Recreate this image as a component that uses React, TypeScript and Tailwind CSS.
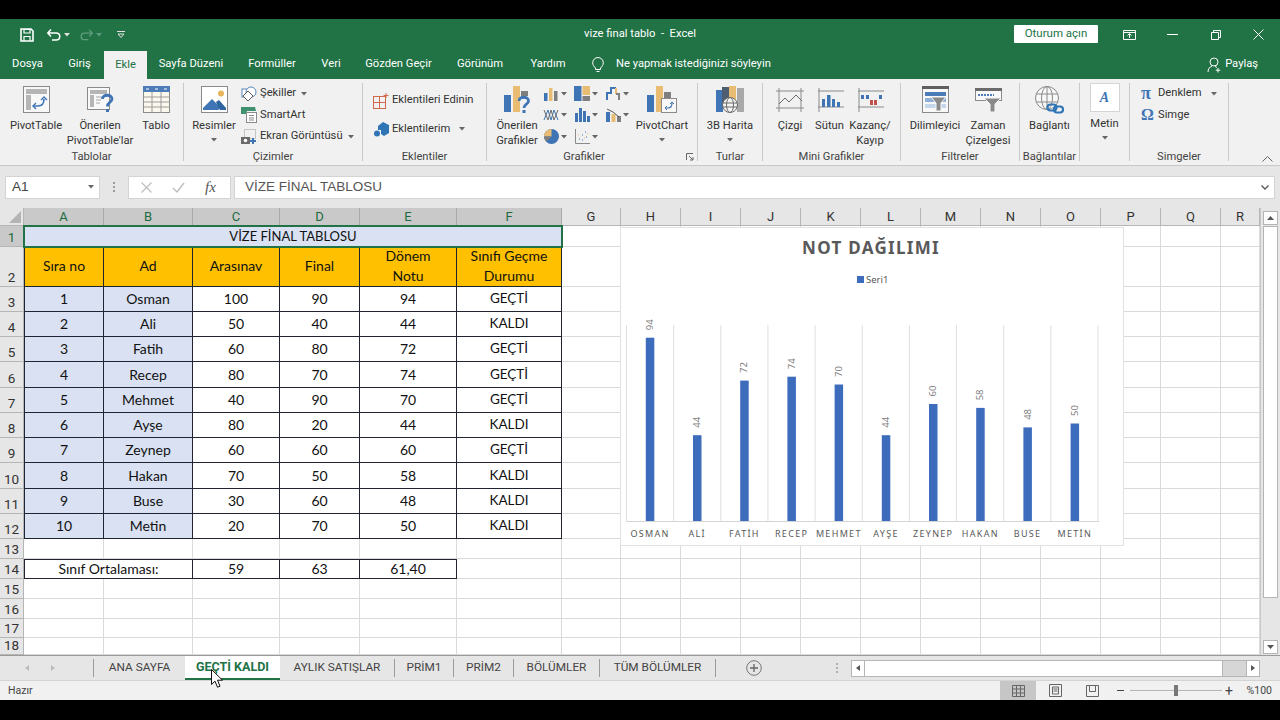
import type { ReactNode } from 'react';

const BLUE = '#3f74b5';
const TAN = '#e8bd73';
const GREY = '#7f7f7f';

function Ico({ w, h, children }: { w: number; h: number; children: ReactNode }) {
  return (
    <svg width={w} height={h} viewBox={`0 0 ${w} ${h}`} fill="none" className="shrink-0">
      {children}
    </svg>
  );
}

function Caret({ color = '#666' }: { color?: string }) {
  return (
    <svg width="6" height="4" viewBox="0 0 6 4" className="shrink-0">
      <path d="M0 0h6L3 3.5z" fill={color} />
    </svg>
  );
}

/* ---------- ribbon icons ---------- */

const pivotIcon = (
  <Ico w={27} h={27}>
    <rect x=".5" y=".5" width="26" height="26" fill="#f8f8f8" stroke="#8a8a8a" />
    <rect x="3" y="3" width="21" height="5" fill="#b5b5b5" />
    <rect x="3" y="9" width="5" height="15" fill="#b5b5b5" />
    <path d="M11 20h4c4 0 6-3 6-7" stroke={BLUE} strokeWidth="1.6" />
    <path d="M13 17l-3 3 3 3M18 14l3-3 3 3" stroke={BLUE} strokeWidth="1.4" />
  </Ico>
);

const suggestedPivotIcon = (
  <Ico w={27} h={27}>
    <rect x=".5" y="1.500" width="22" height="22" fill="#f8f8f8" stroke="#8a8a8a" />
    <rect x="3" y="4" width="17" height="4" fill="#b5b5b5" />
    <rect x="3" y="9" width="4" height="12" fill="#b5b5b5" />
    <path d="M9 11h6M9 14h5M9 17h4" stroke="#a8a8a8" />
    <path d="M15.500 13c0-5 9.500-5 9.500 0 0 3.500-4.500 3-4.500 7.500" stroke={BLUE} strokeWidth="2.800" />
    <rect x="19" y="23" width="3" height="3" fill={BLUE} />
  </Ico>
);

const tableIcon = (
  <Ico w={27} h={27}>
    <rect x=".5" y=".5" width="26" height="26" fill="#fdf8ee" stroke="#8a8a8a" />
    <rect x="0" y="0" width="27" height="6" fill="#4d7db8" />
    <path d="M3 3h3M12 3h3M21 3h3" stroke="#fff" />
    <path d="M0 11h27M0 16h27M0 21h27M9 6v21M18 6v21" stroke="#9c9c9c" />
  </Ico>
);

const pictureIcon = (
  <Ico w={27} h={27}>
    <rect x=".5" y=".5" width="26" height="26" fill="#fff" stroke="#8a8a8a" />
    <circle cx="20" cy="7.500" r="3" fill="#e8b45c" />
    <path d="M2 22l9-9 9 9-3 2H2z" fill={BLUE} />
    <path d="M15 16l3-2 7 8v2h-6z" fill="#2e659f" />
  </Ico>
);

const shapesIcon = (
  <Ico w={16} h={16}>
    <rect x="1" y="3" width="8" height="8" stroke="#5a86b8" fill="#fff" />
    <circle cx="10" cy="6" r="5" stroke="#5a86b8" fill="#fff" />
    <path d="M7 5l5 5-5 5-5-5z" stroke="#5f5f5f" fill="#fff" />
  </Ico>
);

const smartArtIcon = (
  <Ico w={16} h={16}>
    <path d="M0 0h14l1 4H6L5 7H0z" fill="#3f9170" />
    <rect x="5.500" y="5.500" width="10" height="10" fill="#fff" stroke="#8a8a8a" />
    <path d="M8 8.500h5M8 11h5M8 13h5" stroke="#8a8a8a" />
  </Ico>
);

const screenshotIcon = (
  <Ico w={16} h={16}>
    <rect x="3.500" y=".5" width="11" height="9" stroke="#999" strokeDasharray="1 1" />
    <rect x="0" y="8" width="9" height="7" fill="#6b6b6b" />
    <circle cx="4.500" cy="11.500" r="1.800" fill="#fff" />
    <path d="M12 9v6M9 12h6" stroke={BLUE} strokeWidth="2" />
  </Ico>
);

const addInGridIcon = (
  <Ico w={16} h={16}>
    <rect x=".5" y="3.500" width="12" height="12" stroke="#d0694a" />
    <path d="M.5 9.500h12M6.500 3.500v12" stroke="#d0694a" />
    <path d="M13 0v5M10.500 2.500h5" stroke="#d0694a" />
  </Ico>
);

const myAddInIcon = (
  <Ico w={15} h={15}>
    <path d="M4 4l5-4 6 3v8l-5 3-3-2V8H4z" fill="#2f75b5" />
    <circle cx="3" cy="11.500" r="3" fill="#2f75b5" />
  </Ico>
);

const suggestedChartIcon = (
  <Ico w={27} h={27}>
    <rect x="0" y="9" width="7" height="17" fill={BLUE} />
    <rect x="9" y="0" width="7" height="26" fill={TAN} />
    <rect x="17" y="5" width="7" height="5" fill={GREY} />
    <path d="M15 15c0-5 9.500-5 9.500 0 0 3.500-4.500 3-4.500 7" stroke={BLUE} strokeWidth="2.800" />
    <rect x="18.500" y="24" width="3" height="3" fill={BLUE} />
  </Ico>
);

const pivotChartIcon = (
  <Ico w={31} h={27}>
    <rect x="0" y="9" width="7" height="17" fill={BLUE} />
    <rect x="9" y="0" width="7" height="26" fill={TAN} />
    <rect x="17" y="6" width="7" height="9" fill={GREY} />
    <rect x="14.500" y="12.500" width="15" height="14" fill="#f8f8f8" stroke="#8a8a8a" />
    <path d="M18 22h3c3 0 4-2 4-5" stroke={BLUE} strokeWidth="1.200" />
    <path d="M23 18l2-2 2 2M20 20l-2 2 2 2" stroke={BLUE} />
  </Ico>
);

const colChart = (
  <Ico w={14} h={14}>
    <rect x="0" y="6" width="3.500" height="8" fill={BLUE} />
    <rect x="5" y="1" width="3.500" height="13" fill={TAN} />
    <rect x="10" y="4" width="3.500" height="10" fill={GREY} />
  </Ico>
);
const treeChart = (
  <Ico w={16} h={16}>
    <rect x="0" y="0" width="7.500" height="15" fill={BLUE} />
    <rect x="8.500" y="0" width="7.500" height="9" fill={TAN} />
    <rect x="8.500" y="10" width="7.500" height="5" fill={GREY} />
  </Ico>
);
const fallChart = (
  <Ico w={15} h={15}>
    <path d="M1 14V7h4V2h5" stroke={BLUE} strokeWidth="2" />
    <path d="M10 2v6" stroke={TAN} strokeWidth="2" />
    <path d="M10 8h3v6" stroke={GREY} strokeWidth="2" />
  </Ico>
);
const lineChart = (
  <Ico w={16} h={14}>
    <path d="M1 12L5 2l3 10 3-10 4 10" stroke={BLUE} />
    <path d="M1 2l4 10 3-10 3 10 4-10" stroke="#6b6b6b" />
  </Ico>
);
const histChart = (
  <Ico w={15} h={14}>
    <rect x="0" y="5" width="3" height="9" fill={BLUE} />
    <rect x="4" y="0" width="3" height="14" fill={BLUE} />
    <rect x="8" y="3" width="3" height="11" fill={BLUE} />
    <rect x="12" y="8" width="3" height="6" fill={BLUE} />
  </Ico>
);
const comboChart = (
  <Ico w={15} h={14}>
    <rect x="0" y="4" width="4" height="10" fill={BLUE} />
    <rect x="5.500" y="6" width="4" height="8" fill={TAN} />
    <rect x="11" y="8" width="4" height="6" fill={GREY} />
    <path d="M1 1l6 3 6 5" stroke="#555" />
  </Ico>
);
const pieChart = (
  <Ico w={15} h={15}>
    <circle cx="7.500" cy="7.500" r="7.500" fill={BLUE} />
    <path d="M7.500 7.500V0A7.500 7.500 0 0 0 0 7.500z" fill={TAN} />
    <path d="M7.500 7.500H0a7.500 7.500 0 0 0 2.200 5.300z" fill={GREY} />
  </Ico>
);
const scatterChart = (
  <Ico w={15} h={15}>
    <path d="M.5 0v14.500H15" stroke="#8a8a8a" />
    <path d="M4 10h1M7 11h1M7 6h1M11 8h1M10 3h1" stroke={BLUE} />
    <path d="M3 6h1M9 9h1M12 5h1" stroke={TAN} />
  </Ico>
);

const mapIcon = (
  <Ico w={28} h={28}>
    <rect x="0" y="4" width="7" height="22" fill={BLUE} />
    <rect x="6" y="1" width="7" height="20" fill="#4e5e70" />
    <rect x="13" y="0" width="7" height="20" fill={TAN} />
    <rect x="21" y="2" width="7" height="24" fill="#a9a9a9" />
    <circle cx="14" cy="19" r="7.500" fill="#f4f4f4" stroke="#6b6b6b" />
    <ellipse cx="14" cy="19" rx="3.500" ry="7.500" stroke="#6b6b6b" />
    <path d="M7 17h14M7 21h14" stroke="#6b6b6b" />
  </Ico>
);

const miniFrame = <path d="M2 3h26M2 19h26M3 0v24" stroke="#8a8a8a" />;
const miniLine = (
  <Ico w={28} h={24}>
    <path d="M0 3h28M0 20h28M3 0v24M25 0v24" stroke="#8a8a8a" />
    <path d="M3 16l6-6 4 4 7-7 6 6" stroke="#6b6b6b" />
  </Ico>
);
const miniCol = (
  <Ico w={28} h={24}>
    {miniFrame}
    <rect x="6" y="11" width="3" height="8" fill={BLUE} />
    <rect x="11" y="7" width="3.500" height="12" fill={BLUE} />
    <rect x="16" y="11" width="3" height="8" fill={BLUE} />
    <rect x="21" y="14" width="3" height="5" fill={BLUE} />
  </Ico>
);
const miniWinLoss = (
  <Ico w={28} h={24}>
    {miniFrame}
    <rect x="5" y="7" width="3" height="4" fill={BLUE} />
    <rect x="10" y="7" width="3" height="4" fill={BLUE} />
    <rect x="14" y="12" width="3" height="5" fill="#c0504d" />
    <rect x="18" y="12" width="3" height="5" fill="#c0504d" />
    <rect x="23" y="7" width="3" height="4" fill={BLUE} />
  </Ico>
);

const slicerIcon = (
  <Ico w={27} h={27}>
    <rect x=".5" y=".5" width="26" height="26" fill="#f8f8f8" stroke="#8a8a8a" />
    <rect x="0" y="0" width="27" height="3" fill="#5f5f5f" />
    <rect x="3" y="6" width="21" height="4" fill="#4d7db8" />
    <rect x="3" y="12" width="21" height="4" fill="#8fb0d6" />
    <rect x="3" y="18" width="21" height="4" fill="#c5d6ea" />
    <path d="M9 11h15l-5 6v8h-5v-8z" fill="#8a8a8a" stroke="#f8f8f8" />
  </Ico>
);
const timelineIcon = (
  <Ico w={27} h={26}>
    <rect x=".5" y="1.500" width="26" height="12" fill="#f8f8f8" stroke="#8a8a8a" />
    <rect x="0" y="1" width="27" height="3" fill="#6b6b6b" />
    <path d="M3 8h16" stroke="#4d7db8" strokeWidth="2" strokeDasharray="2 1" />
    <path d="M9 11h17l-6 6v8h-5v-8z" fill="#8a8a8a" stroke="#f8f8f8" />
  </Ico>
);
const linkIcon = (
  <Ico w={30} h={28}>
    <circle cx="12" cy="12" r="11.500" fill="#f8f8f8" stroke="#8a8a8a" />
    <ellipse cx="12" cy="12" rx="5.500" ry="11.500" stroke="#8a8a8a" />
    <path d="M1 8h22M1 16h22M12 0v24" stroke="#8a8a8a" />
    <rect x="12.500" y="18.500" width="9" height="6" rx="3" stroke="#2f75b5" strokeWidth="2.200" />
    <rect x="19" y="20.500" width="9" height="6" rx="3" stroke="#2f75b5" strokeWidth="2.200" />
  </Ico>
);

/* ---------- ribbon pieces ---------- */

function Big({ w, icon, lines, caret }: { w: number; icon: ReactNode; lines: string[]; caret?: boolean }) {
  return (
    <div style={{ width: w }} className="flex shrink-0 flex-col items-center pt-[7px]">
      <div className="flex h-[27px] items-center">{icon}</div>
      <div className="mt-[5px] text-center leading-[15px] whitespace-nowrap">
        {lines.map((l) => (
          <div key={l}>{l}</div>
        ))}
      </div>
      {caret && (
        <div className="mt-[5px]">
          <Caret />
        </div>
      )}
    </div>
  );
}

function Small({ icon, label, caret }: { icon: ReactNode; label: string; caret?: boolean }) {
  return (
    <div className="flex h-[21.500px] items-center gap-[3px] whitespace-nowrap">
      <div className="flex w-[16px] justify-center">{icon}</div>
      <span>{label}</span>
      {caret && (
        <span className="ml-[2px]">
          <Caret />
        </span>
      )}
    </div>
  );
}

function Group({ w, label, children }: { w: number; label?: ReactNode; children: ReactNode }) {
  return (
    <>
      <div style={{ width: w }} className="flex shrink-0 flex-col">
        <div className="flex h-[71px] overflow-visible">{children}</div>
        <div className="flex h-[15px] items-center justify-center whitespace-nowrap text-[#444]">{label}</div>
      </div>
      <div className="my-[4px] w-px shrink-0 bg-[#c9c9c9]" />
    </>
  );
}

function ChartCell({ icon }: { icon: ReactNode }) {
  return (
    <div className="flex h-[21.500px] items-center gap-[2px]">
      <div className="flex w-[16px] justify-center">{icon}</div>
      <Caret />
    </div>
  );
}

function Ribbon() {
  return (
    <div className="flex h-[86px] bg-[#f1f1f1] text-[11.200px] text-[#333]">
      <Group w={183} label="Tablolar">
        <div className="ml-[7px] flex">
          <Big w={58} icon={pivotIcon} lines={['PivotTable']} />
          <div className="-ml-[1px] flex">
            <Big w={72} icon={suggestedPivotIcon} lines={['Önerilen', "PivotTable'lar"]} />
            <Big w={40} icon={tableIcon} lines={['Tablo']} />
          </div>
        </div>
      </Group>
      <Group w={178} label="Çizimler">
        <div className="ml-[3px]">
          <Big w={54} icon={pictureIcon} lines={['Resimler']} caret />
        </div>
        <div className="pt-[4px]">
          <Small icon={shapesIcon} label="Şekiller" caret />
          <Small icon={smartArtIcon} label="SmartArt" />
          <Small icon={screenshotIcon} label="Ekran Görüntüsü" caret />
        </div>
      </Group>
      <Group w={123} label="Eklentiler">
        <div className="flex flex-col gap-[7px] pt-[11px] pl-[10px]">
          <Small icon={addInGridIcon} label="Eklentileri Edinin" />
          <div className="flex items-center">
            <Small icon={myAddInIcon} label="Eklentilerim" />
            <span className="ml-[9px]">
              <Caret />
            </span>
          </div>
        </div>
      </Group>
      <div className="relative flex">
        <Group w={210} label={<span className="pr-[16px]">Grafikler</span>}>
          <div className="-mr-[4px]">
            <Big w={60} icon={suggestedChartIcon} lines={['Önerilen', 'Grafikler']} />
          </div>
          <div className="grid h-[69px] grid-cols-[31px_31px_31px] content-start pt-[4px]">
            <ChartCell icon={colChart} />
            <ChartCell icon={treeChart} />
            <ChartCell icon={fallChart} />
            <ChartCell icon={lineChart} />
            <ChartCell icon={histChart} />
            <ChartCell icon={comboChart} />
            <ChartCell icon={pieChart} />
            <ChartCell icon={scatterChart} />
          </div>
          <div className="-ml-[6px]">
            <Big w={64} icon={pivotChartIcon} lines={['PivotChart']} caret />
          </div>
        </Group>
        <svg width="8" height="8" viewBox="0 0 8 8" className="absolute top-[74px] left-[199px]" fill="none">
          <path d="M.5 7V.5H7M3 3l4 4M7 4v3H4" stroke="#666" />
        </svg>
      </div>
      <Group w={64} label="Turlar">
        <Big w={64} icon={mapIcon} lines={['3B Harita']} caret />
      </Group>
      <Group w={137} label="Mini Grafikler">
        <div className="ml-[7px] flex">
          <Big w={40} icon={miniLine} lines={['Çizgi']} />
          <Big w={39} icon={miniCol} lines={['Sütun']} />
          <Big w={42} icon={miniWinLoss} lines={['Kazanç/', 'Kayıp']} />
        </div>
      </Group>
      <Group w={118} label="Filtreler">
        <div className="ml-[5px] flex">
          <Big w={58} icon={slicerIcon} lines={['Dilimleyici']} />
          <Big w={48} icon={timelineIcon} lines={['Zaman', 'Çizelgesi']} />
        </div>
      </Group>
      <Group w={59} label="Bağlantılar">
        <Big w={59} icon={linkIcon} lines={['Bağlantı']} />
      </Group>
      <Group w={49}>
        <div className="flex w-[49px] flex-col items-center pt-[4px]">
          <div className="flex h-[29px] w-[30px] items-center justify-center border border-[#d4d4d4] bg-white font-['Liberation_Serif',serif] text-[14px] font-bold text-[#3f74b5] italic">
            A
          </div>
          <div className="mt-[4px] leading-[15px]">Metin</div>
          <div className="mt-[5px]">
            <Caret />
          </div>
        </div>
      </Group>
      <Group w={98} label="Simgeler">
        <div className="flex w-full flex-col pt-[4px] pl-[11px]">
          <div className="flex h-[21.500px] items-center">
            <span className="w-[17px] font-['Liberation_Serif',serif] text-[18px] font-bold text-[#3f74b5]">π</span>
            <span>Denklem</span>
            <span className="ml-[9px]">
              <Caret />
            </span>
          </div>
          <div className="flex h-[21.500px] items-center">
            <span className="w-[17px] font-['Liberation_Serif',serif] text-[16px] font-bold text-[#3f74b5]">Ω</span>
            <span>Simge</span>
          </div>
        </div>
      </Group>
      <div className="flex flex-1 items-end justify-end pr-[7px] pb-[3px]">
        <svg width="11" height="6" viewBox="0 0 11 6" fill="none">
          <path d="M.5 5.500l5-5 5 5" stroke="#666" />
        </svg>
      </div>
    </div>
  );
}

/* ---------- title bar ---------- */

function TitleBar() {
  return (
    <div className="relative flex h-[31px] items-center bg-[#217346] text-white">
      <div className="flex items-center pl-[20px]">
        <svg width="14" height="14" viewBox="0 0 14 14" fill="none">
          <path d="M1 1h10l2 2v10H1z" stroke="#fff" strokeWidth="1.600" />
          <path d="M4 1.500h6V5H4zM4 13V8.500h6V13" stroke="#fff" strokeWidth="1.200" />
        </svg>
        <svg width="14" height="12" viewBox="0 0 14 12" fill="none" className="ml-[13px]">
          <path d="M1 4h8c5 0 5 7 0 7H5M4 .5L.8 4 4 7.500" stroke="#fff" strokeWidth="1.500" />
        </svg>
        <span className="ml-[3px]">
          <Caret color="#e0e0e0" />
        </span>
        <svg width="13" height="12" viewBox="0 0 14 12" fill="none" className="ml-[10px]">
          <path d="M13 4H5c-5 0-5 7 0 7h4M10 .5L13.200 4 10 7.500" stroke="#5f9c7d" strokeWidth="1.500" />
        </svg>
        <span className="ml-[3px]">
          <Caret color="#5f9c7d" />
        </span>
        <svg width="8" height="7" viewBox="0 0 8 7" fill="none" className="ml-[15px]">
          <path d="M0 .5h8M1 3h6L4 6.500z" stroke="#e0e0e0" />
        </svg>
      </div>
      <div className="absolute left-[584px] pb-[1px] text-[11.200px] whitespace-pre">vize final tablo  -  Excel</div>
      <div className="ml-auto flex items-center">
        <div className="mr-[10px] -mt-[1px] flex h-[18px] w-[84px] items-center justify-center rounded-[1px] bg-white text-[11.500px] text-[#217346]">
          Oturum açın
        </div>
        <div className="flex w-[43px] justify-center">
          <svg width="13" height="10" viewBox="0 0 13 10" fill="none">
            <path d="M.5.500h12v9H.5zM.5 2.500h12M6.500 8V4M4.500 5.500l2-2 2 2" stroke="#fff" />
          </svg>
        </div>
        <div className="flex w-[43px] justify-center">
          <svg width="11" height="1" viewBox="0 0 11 1">
            <path d="M0 .5h11" stroke="#fff" />
          </svg>
        </div>
        <div className="flex w-[43px] justify-center">
          <svg width="10" height="10" viewBox="0 0 10 10" fill="none">
            <path d="M.5 2.500h7v7h-7zM2.500 2.500v-2h7v7h-2" stroke="#fff" />
          </svg>
        </div>
        <div className="flex w-[43px] justify-center">
          <svg width="11" height="11" viewBox="0 0 11 11" fill="none">
            <path d="M.5.500l10 10M10.500.500l-10 10" stroke="#fff" />
          </svg>
        </div>
      </div>
    </div>
  );
}

const tabs: [string, number][] = [
  ['Dosya', 55],
  ['Giriş', 49],
  ['Ekle', 43],
  ['Sayfa Düzeni', 88],
  ['Formüller', 74],
  ['Veri', 44],
  ['Gözden Geçir', 91],
  ['Görünüm', 72],
  ['Yardım', 64],
];

function MenuTabs() {
  return (
    <div className="flex h-[29px] items-stretch bg-[#217346] text-[11.200px] text-white">
      {tabs.map(([t, w]) => (
        <div
          key={t}
          style={{ width: w }}
          className={`flex items-center justify-center whitespace-nowrap ${t === 'Ekle' ? 'mt-[1px] bg-[#f1f1f1] text-[#217346]' : ''}`}
        >
          {t}
        </div>
      ))}
      <div className="ml-[12px] flex items-center">
        <svg width="12" height="16" viewBox="0 0 12 16" fill="none">
          <path d="M3.500 11C2 9.500.7 8 .7 5.800a5.300 5.300 0 0 1 10.600 0C11.300 8 10 9.500 8.500 11v1.500h-5zM4.500 14.500h3" stroke="#fff" />
        </svg>
        <span className="ml-[12px] whitespace-nowrap">Ne yapmak istediğinizi söyleyin</span>
      </div>
      <div className="ml-auto flex items-center gap-[3px] pr-[22px]">
        <svg width="15" height="16" viewBox="0 0 15 16" fill="none">
          <circle cx="7" cy="5" r="4" stroke="#fff" />
          <path d="M1 15c0-3 1.500-5 4-6M8 9.500c1 .3 1.500.7 2 1.200M11 11v4.500M8.800 13.200h4.500" stroke="#fff" />
        </svg>
        <span>Paylaş</span>
      </div>
    </div>
  );
}

/* ---------- formula bar ---------- */

function FormulaBar() {
  return (
    <div className="flex h-[43px] items-center border-t border-[#c8c8c8] bg-[#e6e6e6] pr-[5px] pl-[5px]">
      <div className="flex h-[23px] w-[95px] items-center justify-between border border-[#d4d4d4] bg-white pr-[5px] pl-[6px] font-['Liberation_Sans',sans-serif] text-[13.500px] text-[#444]">
        A1
        <Caret />
      </div>
      <div className="flex w-[28px] flex-col items-center gap-[2px]">
        <span className="h-[2px] w-[2px] bg-[#9a9a9a]" />
        <span className="h-[2px] w-[2px] bg-[#9a9a9a]" />
        <span className="h-[2px] w-[2px] bg-[#9a9a9a]" />
      </div>
      <div className="flex h-[23px] w-[103px] items-center border border-[#d4d4d4] bg-white">
        <svg width="11" height="11" viewBox="0 0 11 11" fill="none" className="ml-[12px]">
          <path d="M.5.500l10 10M10.500.500l-10 10" stroke="#bdbdbd" strokeWidth="1.200" />
        </svg>
        <svg width="13" height="11" viewBox="0 0 13 11" fill="none" className="ml-[20px]">
          <path d="M1 6l4 4 7-9" stroke="#bdbdbd" strokeWidth="1.400" />
        </svg>
        <span className="ml-[20px] font-['Liberation_Serif',serif] text-[15px] text-[#555] italic">fx</span>
      </div>
      <div className="ml-[3px] flex h-[23px] flex-1 items-center justify-between border border-[#d4d4d4] bg-white pr-[5px] pl-[10px] font-['Liberation_Sans',sans-serif] text-[13.500px] text-[#555]">
        VİZE FİNAL TABLOSU
        <svg width="8" height="5" viewBox="0 0 8 5" fill="none">
          <path d="M.5.500L4 4 7.500.500" stroke="#555" strokeWidth="1.300" />
        </svg>
      </div>
    </div>
  );
}

/* ---------- sheet ---------- */

const columns = ['A', 'B', 'C', 'D', 'E', 'F', 'G', 'H', 'I', 'J', 'K', 'L', 'M', 'N', 'O', 'P', 'Q', 'R'];

const students: [number, string, number, number, number, string][] = [
  [1, 'Osman', 100, 90, 94, 'GEÇTİ'],
  [2, 'Ali', 50, 40, 44, 'KALDI'],
  [3, 'Fatih', 60, 80, 72, 'GEÇTİ'],
  [4, 'Recep', 80, 70, 74, 'GEÇTİ'],
  [5, 'Mehmet', 40, 90, 70, 'GEÇTİ'],
  [6, 'Ayşe', 80, 20, 44, 'KALDI'],
  [7, 'Zeynep', 60, 60, 60, 'GEÇTİ'],
  [8, 'Hakan', 70, 50, 58, 'KALDI'],
  [9, 'Buse', 30, 60, 48, 'KALDI'],
  [10, 'Metin', 20, 70, 50, 'KALDI'],
];

const GRID = 'border-r border-b border-[#dadada]';
const INK = 'flex items-center justify-center border-r border-b border-[#1f2430] pb-[1px] text-[#111]';

function RowHead({ n, active }: { n: number; active?: boolean }) {
  return (
    <div
      className={`flex items-end justify-center border-r border-b border-[#b5b5b5] font-['Roboto',sans-serif] text-[13.500px] leading-[17px] ${
        active ? 'bg-[#c9c9c9] text-[#1c6b3f]' : 'bg-[#e6e6e6] text-[#333]'
      }`}
    >
      {n}
    </div>
  );
}

function EmptyCells({ count }: { count: number }) {
  return (
    <>
      {Array.from({ length: count }, (_, i) => (
        <div key={i} className={GRID} />
      ))}
    </>
  );
}

function ColumnHeaders() {
  return (
    <>
      <div className="flex items-end justify-end border-r border-b border-[#b5b5b5] bg-[#e6e6e6] p-[2px]">
        <svg width="12" height="12" viewBox="0 0 12 12">
          <path d="M12 0v12H0z" fill="#b4b4b4" />
        </svg>
      </div>
      {columns.map((c, i) => (
        <div
          key={c}
          className={`flex items-center justify-center border-r font-['Roboto',sans-serif] text-[13px] ${
            i < 6
              ? 'border-[#a9a9a9] bg-[#c9c9c9] text-[#1c6b3f]'
              : 'border-b border-[#b5b5b5] bg-[#e6e6e6] text-[#333]'
          }`}
        >
          {c}
        </div>
      ))}
    </>
  );
}

const barData = [
  { n: 'OSMAN', v: 94 },
  { n: 'ALİ', v: 44 },
  { n: 'FATİH', v: 72 },
  { n: 'RECEP', v: 74 },
  { n: 'MEHMET', v: 70 },
  { n: 'AYŞE', v: 44 },
  { n: 'ZEYNEP', v: 60 },
  { n: 'HAKAN', v: 58 },
  { n: 'BUSE', v: 48 },
  { n: 'METİN', v: 50 },
];

function Chart() {
  const base = 521;
  return (
    <div className="absolute top-[19px] left-[620px] h-[319px] w-[504px] border border-[#e2e2e2] bg-white font-['Noto_Sans',sans-serif]">
      <svg width="502" height="317" viewBox="621 228 502 317" className="block">
        <text x="871" y="254" textAnchor="middle" fontSize="17" fontWeight="700" letterSpacing="1.300" fill="#595959">
          NOT DAĞILIMI
        </text>
        <rect x="857" y="276" width="7" height="7" fill="#3e6cbd" />
        <text x="866" y="283" fontSize="9.500" fill="#595959">
          Seri1
        </text>
        {Array.from({ length: 11 }, (_, i) => (
          <line key={i} x1={626.5 + i * 47.15} x2={626.5 + i * 47.15} y1="325" y2={base} stroke="#dfdfdf" />
        ))}
        <line x1="626" x2="1099" y1={base + 0.5} y2={base + 0.5} stroke="#d4d4d4" />
        {barData.map((b, i) => {
          const cx = 650 + i * 47.2;
          const h = b.v * 1.95;
          return (
            <g key={b.n}>
              <rect x={cx - 4.2} y={base - h} width="8.500" height={h} fill="#3e6cbd" />
              <text
                transform={`translate(${cx + 3} ${base - h - 13}) rotate(-90)`}
                textAnchor="middle"
                fontSize="9.500"
                fill="#7f7f7f"
              >
                {b.v}
              </text>
              <text x={cx} y="537" textAnchor="middle" fontSize="9" letterSpacing="1.300" fill="#595959">
                {b.n}
              </text>
            </g>
          );
        })}
      </svg>
    </div>
  );
}

function Sheet() {
  return (
    <div className="relative flex h-[447px] bg-white font-['Lato',sans-serif] text-[14px]">
      <div className="grid h-[447px] w-[1260px] grid-cols-[24px_80px_89px_87px_80px_97px_105px_59px_repeat(10,60px)_39px] grid-rows-[18px_21px_40px_25px_25px_25px_26px_25px_25px_25px_26px_25px_25px_20px_20px_20px_20px_19px_17px] overflow-hidden">
        <ColumnHeaders />

        <RowHead n={1} active />
        <div className="relative z-10 col-span-6 flex items-center justify-center bg-[#d9e1f2] text-[13px] text-[#111] outline-2 -outline-offset-1 outline-[#217346]">
          VİZE FİNAL TABLOSU
        </div>
        <EmptyCells count={12} />

        <RowHead n={2} />
        {['Sıra no', 'Ad', 'Arasınav', 'Final', 'Dönem\nNotu', 'Sınıfı Geçme\nDurumu'].map((h, i) => (
          <div
            key={h}
            className={`${INK} bg-[#ffc000] text-center leading-[20px] whitespace-pre-line ${i === 0 ? 'border-l' : ''}`}
          >
            {h}
          </div>
        ))}
        <EmptyCells count={12} />

        {students.map((s, r) => (
          <div key={s[0]} className="contents">
            <RowHead n={r + 3} />
            <div className={`${INK} border-l bg-[#d9e1f2]`}>{s[0]}</div>
            <div className={`${INK} bg-[#d9e1f2]`}>{s[1]}</div>
            <div className={INK}>{s[2]}</div>
            <div className={INK}>{s[3]}</div>
            <div className={INK}>{s[4]}</div>
            <div className={`${INK} text-[13.500px]`}>{s[5]}</div>
            <EmptyCells count={12} />
          </div>
        ))}

        <RowHead n={13} />
        <EmptyCells count={18} />

        <RowHead n={14} />
        <div className={`${INK} col-span-2 border-t border-l`}>Sınıf Ortalaması:</div>
        <div className={`${INK} border-t`}>59</div>
        <div className={`${INK} border-t`}>63</div>
        <div className={`${INK} border-t`}>61,40</div>
        <EmptyCells count={13} />

        {[15, 16, 17, 18].map((n) => (
          <div key={n} className="contents">
            <RowHead n={n} />
            <EmptyCells count={18} />
          </div>
        ))}
      </div>

      <VScroll />
      <Chart />
    </div>
  );
}

function VScroll() {
  return (
    <div className="flex flex-1 flex-col items-center border-l border-[#c9c9c9] bg-[#e6e6e6] pt-[3px]">
      <div className="flex h-[14px] w-[15px] items-center justify-center border border-[#b5b5b5] bg-white">
        <svg width="7" height="4" viewBox="0 0 7 4">
          <path d="M3.500 0L7 4H0z" fill="#555" />
        </svg>
      </div>
      <div className="mt-[1px] h-[372px] w-[15px] border border-[#b5b5b5] bg-white" />
      <div className="mt-auto mb-[1px] flex h-[14px] w-[15px] items-center justify-center border border-[#b5b5b5] bg-white">
        <svg width="7" height="4" viewBox="0 0 7 4">
          <path d="M3.500 4L7 0H0z" fill="#555" />
        </svg>
      </div>
    </div>
  );
}

/* ---------- bottom bars ---------- */

const sheetTabs: [string, number][] = [
  ['ANA SAYFA', 92],
  ['GEÇTİ KALDI', 95],
  ['AYLIK SATIŞLAR', 115],
  ['PRİM1', 59],
  ['PRİM2', 60],
  ['BÖLÜMLER', 86],
  ['TÜM BÖLÜMLER', 116],
];

function SheetTabs() {
  return (
    <div className="relative flex h-[25px] items-stretch border-t border-[#9a9a9a] bg-[#e6e6e6] text-[11.800px] text-[#444]">
      <div className="flex w-[93px] items-center pl-[25px]">
        <svg width="4" height="6" viewBox="0 0 4 6">
          <path d="M4 0v6L0 3z" fill="#bdbdbd" />
        </svg>
        <svg width="4" height="6" viewBox="0 0 4 6" className="ml-[22px]">
          <path d="M0 0v6l4-3z" fill="#bdbdbd" />
        </svg>
      </div>
      {sheetTabs.map(([t, w], i) => {
        const active = t === 'GEÇTİ KALDI';
        return (
          <div
            key={t}
            style={{ width: w }}
            className={
              active
                ? 'flex items-center justify-center border-b-2 border-[#217346] bg-white text-[12.500px] font-bold whitespace-nowrap text-[#217346]'
                : `my-[3px] flex items-center justify-center border-[#9a9a9a] whitespace-nowrap ${i !== 0 ? 'border-r' : 'border-l'}`
            }
          >
            {t}
          </div>
        );
      })}
      <div className="ml-[30px] flex items-center">
        <svg width="16" height="16" viewBox="0 0 16 16" fill="none">
          <circle cx="8" cy="8" r="7.300" stroke="#777" />
          <path d="M8 4v8M4 8h8" stroke="#666" strokeWidth="1.300" />
        </svg>
      </div>
      <div className="ml-[74px] flex flex-col items-center justify-center gap-[2px]">
        <span className="h-[2px] w-[2px] bg-[#b0b0b0]" />
        <span className="h-[2px] w-[2px] bg-[#b0b0b0]" />
        <span className="h-[2px] w-[2px] bg-[#b0b0b0]" />
      </div>
      <div className="ml-[13px] flex h-[17px] w-[409px] self-center border border-[#b5b5b5] bg-[#d6d6d6]">
        <div className="flex w-[13px] items-center justify-center border-r border-[#b5b5b5] bg-white">
          <svg width="4" height="6" viewBox="0 0 4 6">
            <path d="M4 0v6L0 3z" fill="#555" />
          </svg>
        </div>
        <div className="w-[358px] border-r border-[#b5b5b5] bg-white" />
        <div className="ml-auto flex w-[13px] items-center justify-center border-l border-[#b5b5b5] bg-white">
          <svg width="4" height="6" viewBox="0 0 4 6">
            <path d="M0 0v6l4-3z" fill="#555" />
          </svg>
        </div>
      </div>
    </div>
  );
}

function StatusBar() {
  return (
    <div className="flex h-[20px] items-center border-t border-[#d4d4d4] bg-[#f1f1f1] pl-[8px] text-[10.500px] text-[#444]">
      Hazır
      <div className="ml-auto flex h-full items-center">
        <div className="flex h-full w-[36px] items-center justify-center bg-[#c6c6c6]">
          <svg width="13" height="12" viewBox="0 0 13 12" fill="none">
            <path d="M.5.500h12v11H.5zM.5 4h12M.5 8h12M4.500.500v11M8.500.500v11" stroke="#666" />
          </svg>
        </div>
        <div className="flex w-[38px] justify-center">
          <svg width="13" height="13" viewBox="0 0 13 13" fill="none">
            <path d="M.5.500h12v12H.5zM3.500 3h6v7h-6zM4.500 5h4M4.500 7h4" stroke="#666" />
          </svg>
        </div>
        <div className="flex w-[37px] justify-center">
          <svg width="13" height="12" viewBox="0 0 13 12" fill="none">
            <path d="M.5.500h12v11H.5zM3.500.500v6h6v-6" stroke="#666" />
          </svg>
        </div>
        <div className="ml-[6px] h-px w-[7px] bg-[#444]" />
        <div className="relative ml-[6px] h-px w-[92px] bg-[#b5b5b5]">
          <div className="absolute -top-[5px] left-[44px] h-[11px] w-[4px] bg-[#777]" />
        </div>
        <span className="w-[14px] text-center text-[14px] leading-none">+</span>
        <span className="mr-[8px] w-[36px] text-right">%100</span>
      </div>
    </div>
  );
}

export default function App() {
  return (
    <div className="relative h-[720px] w-[1280px] overflow-hidden bg-black font-['Roboto',sans-serif]">
      <div className="h-[19px]" />
      <TitleBar />
      <MenuTabs />
      <Ribbon />
      <FormulaBar />
      <Sheet />
      <SheetTabs />
      <StatusBar />
      <svg width="13" height="20" viewBox="0 0 13 20" className="absolute top-[669px] left-[211px]">
        <path d="M.5.500v15l3.500-3.300 2.500 6 2.500-1-2.500-6h5z" fill="#fff" stroke="#111" />
      </svg>
    </div>
  );
}
